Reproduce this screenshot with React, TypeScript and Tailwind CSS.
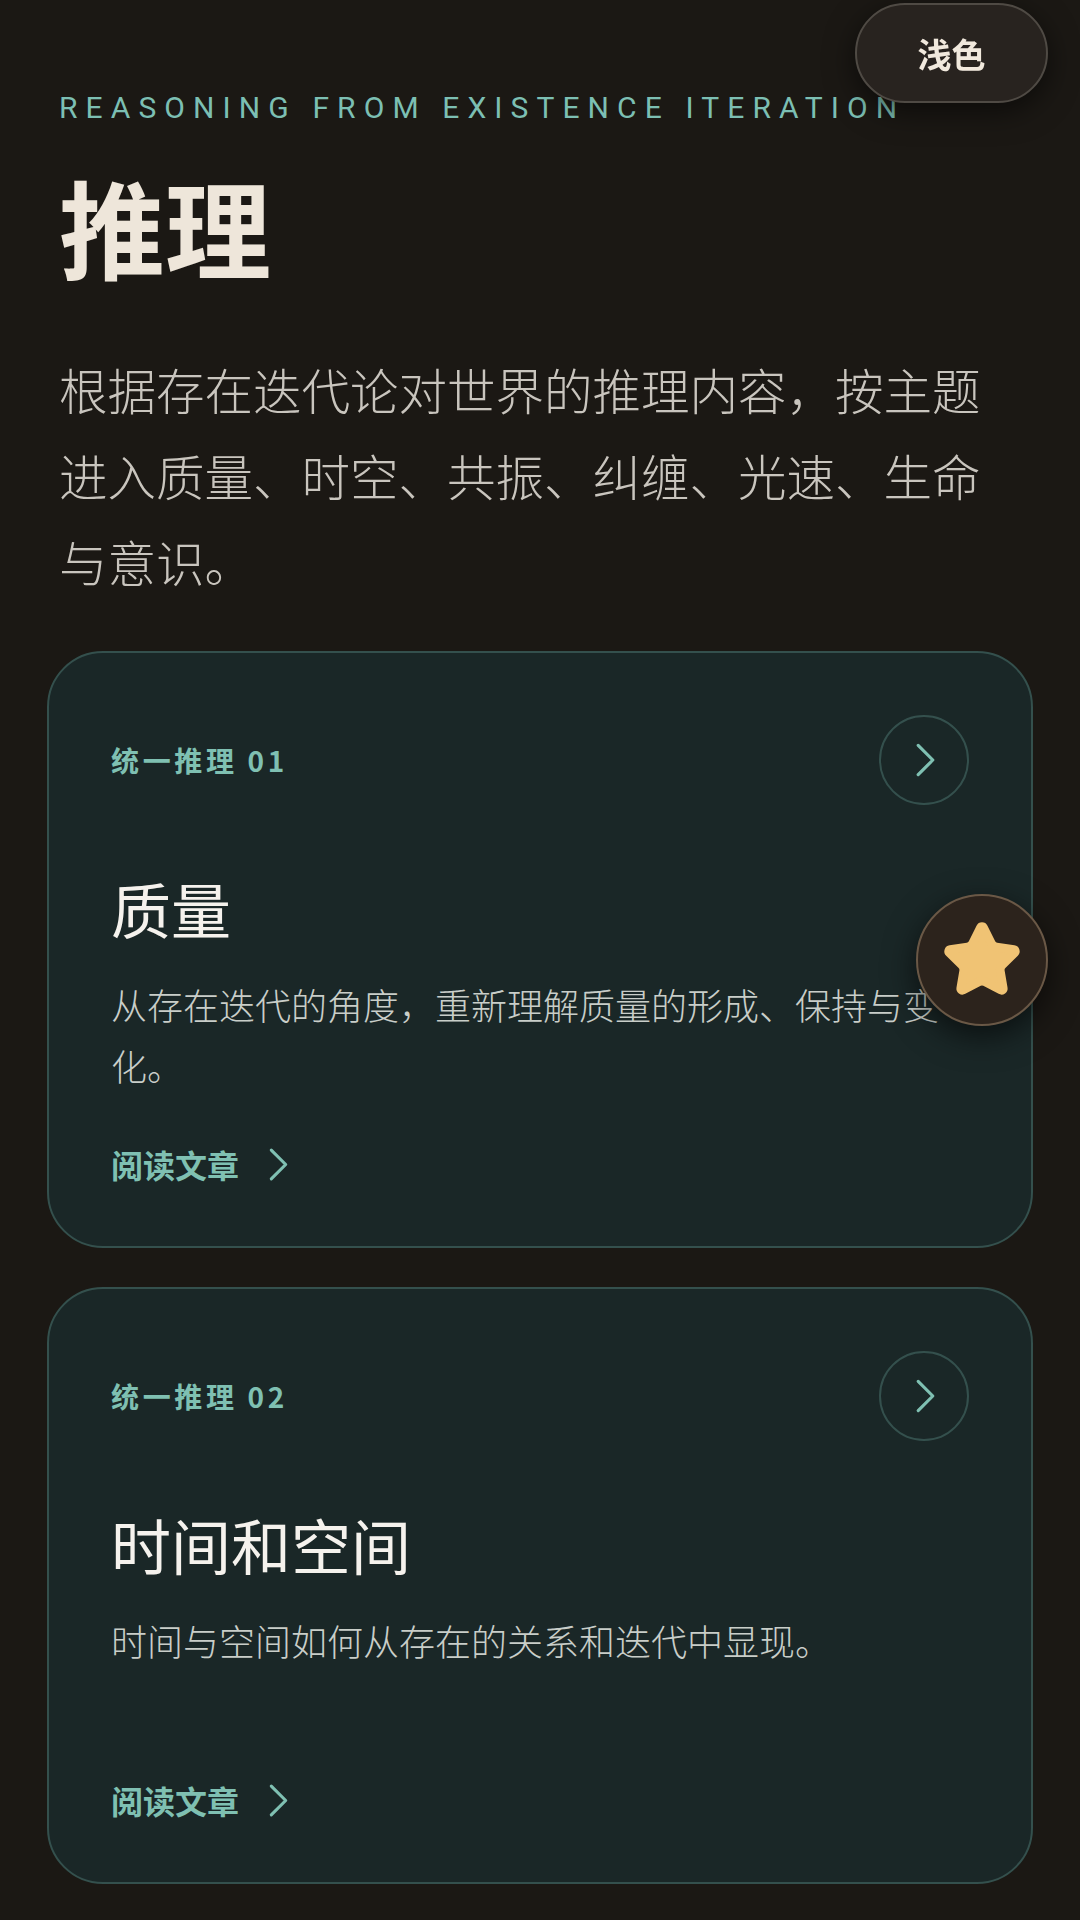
import { Star } from 'lucide-react';

interface Topic {
  no: string;
  title: string;
  desc: string;
}

const topics: Topic[] = [
  { no: '01', title: '质量', desc: '从存在迭代的角度，重新理解质量的形成、保持与变化。' },
  { no: '02', title: '时间和空间', desc: '时间与空间如何从存在的关系和迭代中显现。' },
];

const cjk = "font-['Noto_Sans_CJK_SC','Noto_Sans',sans-serif]";

function Chevron({ className = '' }: { className?: string }) {
  return (
    <svg viewBox="0 0 22 34" fill="none" className={className}>
      <path d="M4 3 L18 17 L4 31" stroke="currentColor" strokeWidth="3" strokeLinecap="round" strokeLinejoin="round" />
    </svg>
  );
}

function TopicCard({ t }: { t: Topic }) {
  return (
    <a className="flex min-h-[597px] flex-col rounded-[56px] border-2 border-[#34504d] bg-[#1a2727] px-[62px] pb-[62px] pt-[62px]">
      <div className="flex items-center justify-between">
        <span className={`${cjk} text-[28px] font-bold leading-[36px] tracking-[0.13em] text-[#7fc0b2]`}>
          统一推理 {t.no}
        </span>
        <span className="flex h-[90px] w-[90px] items-center justify-center rounded-full border-2 border-[#34504d] text-[#7fc0b2]">
          <Chevron className="ml-[2px] h-[36px] w-[23px]" />
        </span>
      </div>
      <h2 className={`${cjk} mt-[67px] text-[60px] font-normal leading-[72px] text-[#f5f2ed]`}>{t.title}</h2>
      <p className={`${cjk} mt-[30px] text-[36px] font-light leading-[61px] text-[#c9cec9]`}>{t.desc}</p>
      <div className={`${cjk} mt-auto flex items-center gap-[28px] text-[32px] font-bold leading-[40px] text-[#7fc0b2]`}>
        <span>阅读文章</span>
        <Chevron className="h-[35px] w-[23px]" />
      </div>
    </a>
  );
}

export default function App() {
  return (
    <div className="relative min-h-screen bg-[#1b1814]">
      <main className="px-[47px] pb-[40px] pt-[90px]">
        <div className="px-[12px]">
          <div className="font-['Roboto','Liberation_Sans',sans-serif] text-[30px] leading-[36px] tracking-[0.27em] text-[#7cbfb3]">
            REASONING FROM EXISTENCE ITERATION
          </div>
          <h1 className={`${cjk} mt-[36px] text-[106px] font-bold leading-[127px] text-[#eee6da]`}>推理</h1>
          <p className={`${cjk} mt-[57px] max-w-[945px] text-[48.5px] font-light leading-[86px] text-[#c9c5be]`}>
            根据存在迭代论对世界的推理内容，按主题进入质量、时空、共振、纠缠、光速、生命与意识。
          </p>
        </div>

        <div className="mt-[47px] flex flex-col gap-[39px]">
          {topics.map(t => (
            <TopicCard key={t.no} t={t} />
          ))}
        </div>
      </main>

      <button className={`${cjk} fixed right-[32px] top-[3px] flex h-[100px] w-[193px] items-center justify-center rounded-full border-2 border-[#4f4a44] bg-[#28231f] text-[34px] font-bold text-[#f1e9dd] shadow-[0_8px_30px_rgba(0,0,0,0.55)]`}>
        浅色
      </button>

      <button className="fixed right-[32px] top-1/2 flex h-[132px] w-[132px] -translate-y-1/2 items-center justify-center rounded-full border-2 border-[#6a5846] bg-[#2c231c] shadow-[0_10px_32px_rgba(0,0,0,0.6)]">
        <Star size={80} color="#f0c374" fill="#f0c374" strokeWidth={2.6} />
      </button>
    </div>
  );
}
